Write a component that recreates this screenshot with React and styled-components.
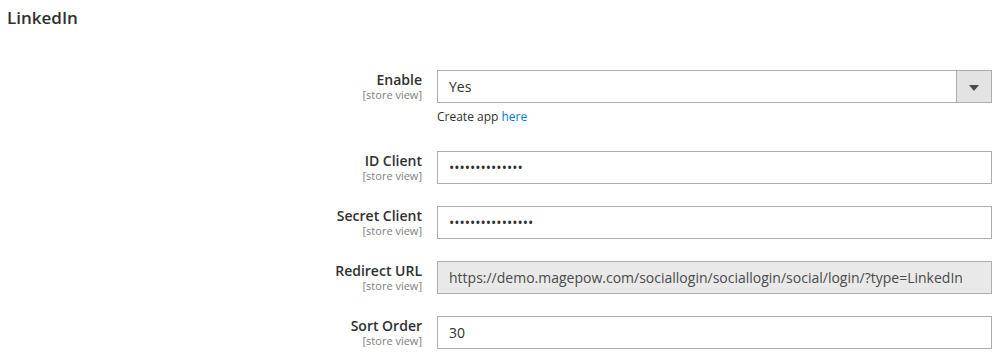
import styled, { createGlobalStyle } from 'styled-components';

const GlobalStyle = createGlobalStyle`
    body {
        margin: 0;
        background: #ffffff;
        font-family: "Open Sans", "Liberation Sans", sans-serif;
        color: #303030;
    }
`;

const Page = styled.div`
    width: 1000px;
    height: 357px;
    overflow: hidden;
    padding: 6px 8px 0 7px;
    box-sizing: border-box;
`;

const Title = styled.h3`
    margin: 0;
    font-size: 17px;
    font-weight: 600;
    line-height: 23px;
    color: #303030;
`;

const Fieldset = styled.div`
    display: flex;
    flex-direction: column;
    gap: 22px;
    margin-top: 41px;
`;

const Row = styled.div`
    display: grid;
    grid-template-columns: 415px 555px;
    column-gap: 15px;
    align-items: start;
`;

const Label = styled.div`
    text-align: right;
    padding-top: 1px;
`;

const LabelText = styled.div`
    font-size: 14px;
    font-weight: 600;
    line-height: 18px;
    color: #303030;
`;

const Scope = styled.div`
    font-size: 11px;
    line-height: 12px;
    color: #808080;
`;

const Field = styled.div`
    display: flex;
    flex-direction: column;
`;

const Input = styled.div`
    height: 33px;
    box-sizing: border-box;
    border: 1px solid #adadad;
    background: ${(props) => (props.$disabled ? '#e9e9e9' : '#ffffff')};
    color: ${(props) => (props.$disabled ? '#4a4a4a' : '#303030')};
    font-size: 14px;
    padding: 0 11px;
    display: flex;
    align-items: center;
    white-space: nowrap;
    overflow: hidden;
`;

const Select = styled.div`
    height: 33px;
    box-sizing: border-box;
    border: 1px solid #adadad;
    background: #ffffff;
    display: flex;
    font-size: 14px;
    color: #303030;
`;

const SelectValue = styled.div`
    flex: 1;
    display: flex;
    align-items: center;
    padding: 0 11px;
`;

const SelectButton = styled.div`
    width: 34px;
    border-left: 1px solid #adadad;
    background: #e3e3e3;
    display: flex;
    align-items: center;
    justify-content: center;
`;

const Arrow = styled.span`
    width: 0;
    height: 0;
    border-left: 5px solid transparent;
    border-right: 5px solid transparent;
    border-top: 6px solid #514943;
    margin-top: 2px;
`;

const Note = styled.div`
    font-size: 12px;
    line-height: 16px;
    color: #303030;
    margin-top: 6px;
    margin-bottom: 4px;
    a {
        color: #007bdb;
        text-decoration: none;
    }
`;

const Dots = styled.span`
    font-size: 14px;
    letter-spacing: 0;
`;

function FieldLabel({ text }) {
    return (
        <Label>
            <LabelText>{text}</LabelText>
            <Scope>[store view]</Scope>
        </Label>
    );
}

export default function App() {
    return (
        <>
            <GlobalStyle />
            <Page>
                <Title>LinkedIn</Title>
                <Fieldset>
                    <Row>
                        <FieldLabel text="Enable" />
                        <Field>
                            <Select>
                                <SelectValue>Yes</SelectValue>
                                <SelectButton>
                                    <Arrow />
                                </SelectButton>
                            </Select>
                            <Note>
                                Create app <a href="#">here</a>
                            </Note>
                        </Field>
                    </Row>
                    <Row>
                        <FieldLabel text="ID Client" />
                        <Input>
                            <Dots>••••••••••••••</Dots>
                        </Input>
                    </Row>
                    <Row>
                        <FieldLabel text="Secret Client" />
                        <Input>
                            <Dots>••••••••••••••••</Dots>
                        </Input>
                    </Row>
                    <Row>
                        <FieldLabel text="Redirect URL" />
                        <Input $disabled>
                            https://demo.magepow.com/sociallogin/sociallogin/social/login/?type=LinkedIn
                        </Input>
                    </Row>
                    <Row>
                        <FieldLabel text="Sort Order" />
                        <Input>30</Input>
                    </Row>
                </Fieldset>
            </Page>
        </>
    );
}
